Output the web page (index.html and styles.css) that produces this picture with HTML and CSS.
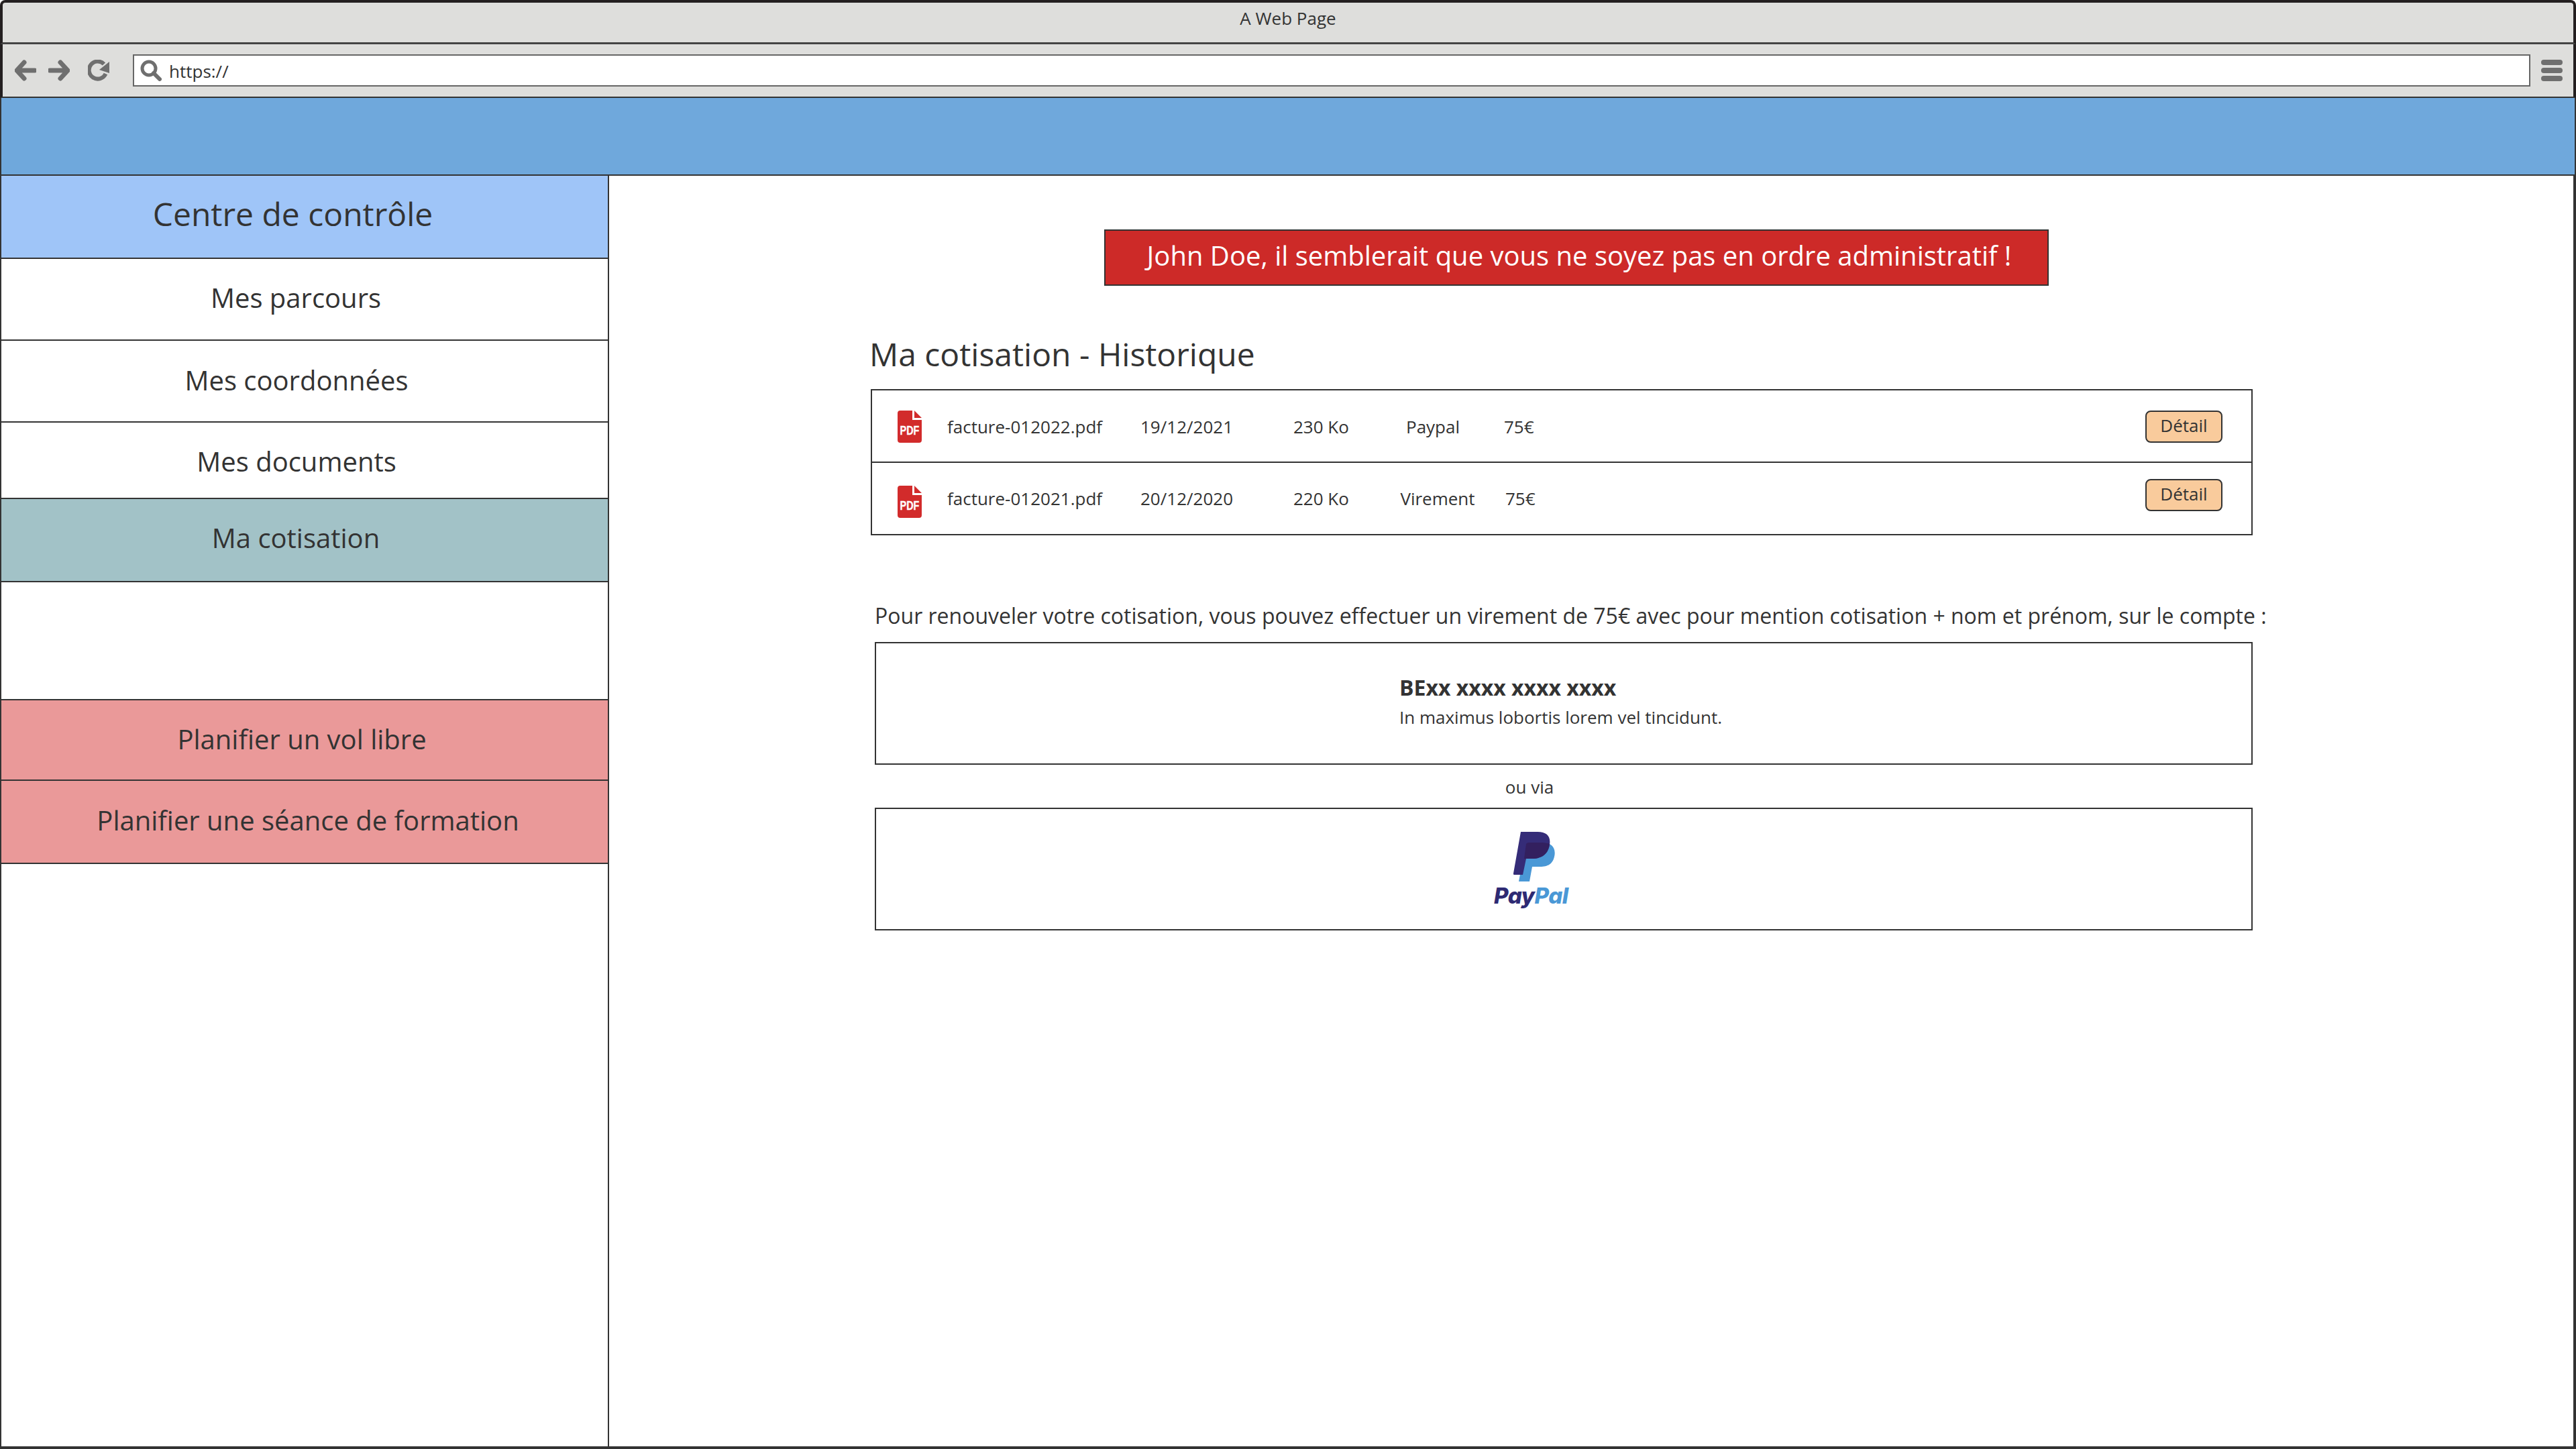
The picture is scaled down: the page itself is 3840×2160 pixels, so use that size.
FILE: index.html
```html
<!DOCTYPE html>
<html>
  <head>
    <link rel="stylesheet" href="styles.css">
  </head>

  <body>
    <div class="window">
      <div class="titlebar">A Web Page</div>
      <div class="toolbar">
        <svg class="tool-icon" viewBox="0 0 32 32"><path d="M14 4 3 16l11 12M4 16h26" fill="none" stroke="#6f6f6f" stroke-width="7" stroke-linecap="round" stroke-linejoin="round"/></svg>
        <svg class="tool-icon forward" viewBox="0 0 32 32"><path d="M18 4l11 12-11 12M28 16H2" fill="none" stroke="#6f6f6f" stroke-width="7" stroke-linecap="round" stroke-linejoin="round"/></svg>
        <svg class="tool-icon reload" viewBox="0 0 32 32"><path d="M26.500 21A13 13 0 1 1 24 6.500" fill="none" stroke="#6f6f6f" stroke-width="6"/><path d="M32 3V20L17 15Z" fill="#6f6f6f"/></svg>
        <div class="address">
          <svg class="search-icon" viewBox="0 0 32 32"><circle cx="13" cy="13" r="10" fill="none" stroke="#6f6f6f" stroke-width="5"/><path d="M20 20l9 9" stroke="#6f6f6f" stroke-width="6" stroke-linecap="round"/></svg>
          <span>https://</span>
        </div>
        <div class="menu-icon"><i></i><i></i><i></i></div>
      </div>
      <div class="top-band"></div>

      <div class="layout">
        <nav class="sidebar">
          <div class="side-item side-head">Centre de contrôle</div>
          <div class="side-item side-parcours">Mes parcours</div>
          <div class="side-item side-coord">Mes coordonnées</div>
          <div class="side-item side-docs">Mes documents</div>
          <div class="side-item side-active">Ma cotisation</div>
          <div class="side-gap"></div>
          <div class="side-item side-plan side-vol">Planifier un vol libre</div>
          <div class="side-item side-plan side-seance">Planifier une séance de formation</div>
        </nav>

        <main class="content">
          <div class="alert">John Doe, il semblerait que vous ne soyez pas en ordre administratif !</div>
          <h1 class="title">Ma cotisation - Historique</h1>

          <div class="history">
            <div class="row row-first">
              <svg class="pdf-icon" viewBox="0 0 36 48"><path d="M4 0H22V14H36V44a4 4 0 0 1-4 4H4a4 4 0 0 1-4-4V4a4 4 0 0 1 4-4ZM25 0 36 11H25Z" fill="#d22b2b"/><text transform="translate(18 36) scale(.9 1.2)" class="pdf-label">PDF</text></svg>
              <span class="cell cell-name">facture-012022.pdf</span>
              <span class="cell cell-date">19/12/2021</span>
              <span class="cell cell-size">230 Ko</span>
              <span class="cell cell-mode">Paypal</span>
              <span class="cell cell-price">75€</span>
              <button class="detail">Détail</button>
            </div>
            <div class="row row-second">
              <svg class="pdf-icon" viewBox="0 0 36 48"><path d="M4 0H22V14H36V44a4 4 0 0 1-4 4H4a4 4 0 0 1-4-4V4a4 4 0 0 1 4-4ZM25 0 36 11H25Z" fill="#d22b2b"/><text transform="translate(18 36) scale(.9 1.2)" class="pdf-label">PDF</text></svg>
              <span class="cell cell-name">facture-012021.pdf</span>
              <span class="cell cell-date">20/12/2020</span>
              <span class="cell cell-size">220 Ko</span>
              <span class="cell cell-mode mode-shift">Virement</span>
              <span class="cell cell-price price-shift">75€</span>
              <button class="detail">Détail</button>
            </div>
          </div>

          <p class="renew">Pour renouveler votre cotisation, vous pouvez effectuer un virement de 75€ avec pour mention cotisation + nom et prénom, sur le compte :</p>

          <div class="pay-box iban">
            <strong>BExx xxxx xxxx xxxx</strong>
            <span>In maximus lobortis lorem vel tincidunt.</span>
          </div>
          <div class="or">ou via</div>
          <div class="pay-box paypal">
            <svg class="pp-mark" viewBox="0 0 62 74">
              <path d="M19 16H43C57 16 64 24 61 37 58 50 49 52 38 52H28L24 74H8Z" fill="#4a98d6"/>
              <path d="M11 0H36C50 0 56 7 54 19 52 34 41 40 28 40H19L14 64H1C0 64 0 63 0 62Z" fill="#352c78"/>
              <path d="M19 18C20 17 21 16 23 16H43C47 16 51 17 54 18 52 34 41 40 28 40H16Z" fill="#33205f"/>
            </svg>
            <div class="pp-text"><span class="pp-pay">Pay</span><span class="pp-pal">Pal</span></div>
          </div>
        </main>
      </div>
    </div>
  </body>
</html>
```

FILE: styles.css
```css
* {
  box-sizing: border-box;
}

body {
  margin: 0;
  background-color: #fff;
  color: #333;
  font-family: "Open Sans", sans-serif;
}

.window {
  display: flex;
  flex-direction: column;
  width: 3840px;
  height: 2160px;
  border-bottom: 4px solid #333;
}

.titlebar {
  height: 66px;
  padding-bottom: 14px;
  display: flex;
  align-items: center;
  justify-content: center;
  background-color: #dededc;
  border: 4px solid #231f20;
  border-bottom: 3px solid #444;
  border-radius: 8px 8px 0 0;
  font-size: 26px;
}

.toolbar {
  height: 80px;
  display: flex;
  align-items: center;
  padding: 0 16px 0 18px;
  background-color: #dededc;
  border-left: 4px solid #231f20;
  border-right: 4px solid #231f20;
  border-bottom: 2px solid #333;
}

.tool-icon {
  width: 32px;
  height: 32px;
  flex-shrink: 0;
}

.forward {
  margin-left: 18px;
}

.reload {
  margin-left: 27px;
}

.address {
  flex: 1;
  height: 48px;
  margin: 0 16px 0 35px;
  display: flex;
  align-items: center;
  padding-left: 9px;
  background-color: #fff;
  border: 2px solid #666;
  font-size: 26px;
}

.address span {
  padding-top: 2px;
}

.search-icon {
  width: 32px;
  height: 32px;
  margin-right: 11px;
}

.menu-icon {
  width: 32px;
  display: flex;
  flex-direction: column;
  gap: 4px;
}

.menu-icon i {
  height: 8px;
  border-radius: 4px;
  background-color: #6f6f6f;
}

.top-band {
  height: 116px;
  background-color: #6fa8dc;
  border: 2px solid #333;
  border-top: none;
}

.layout {
  flex: 1;
  display: flex;
  border-left: 2px solid #333;
  border-right: 4px solid #333;
}

.sidebar {
  width: 906px;
  display: flex;
  flex-direction: column;
  border-right: 2px solid #333;
}

.side-item {
  display: flex;
  align-items: center;
  justify-content: center;
  border-bottom: 2px solid #333;
  font-size: 40px;
}

.side-head {
  height: 124px;
  padding: 0 35px 10px 0;
  background-color: #9fc5f8;
  font-size: 48px;
}

.side-parcours {
  height: 122px;
  padding: 0 26px 6px 0;
}

.side-coord {
  height: 122px;
  padding: 0 24px 4px 0;
}

.side-docs {
  height: 114px;
  padding: 2px 24px 0 0;
}

.side-active {
  height: 124px;
  padding: 0 26px 8px 0;
  background-color: #a2c2c7;
}

.side-gap {
  height: 176px;
  border-bottom: 2px solid #333;
}

.side-plan {
  background-color: #ea9999;
}

.side-vol {
  height: 120px;
  padding: 0 8px 4px 0;
}

.side-seance {
  height: 124px;
  padding: 0 0 6px 10px;
}

.content {
  flex: 1;
  padding: 80px 0 0 386px;
}

.alert {
  width: 1408px;
  height: 84px;
  margin-left: 352px;
  padding: 0 0 8px 8px;
  display: flex;
  align-items: center;
  justify-content: center;
  background-color: #cd2a28;
  border: 2px solid #333;
  color: #fff;
  font-size: 40px;
}

.title {
  margin: 69px 0 19px 2px;
  font-size: 48px;
  font-weight: 400;
  line-height: 66px;
}

.history {
  width: 2060px;
  height: 218px;
  margin-left: 4px;
  border: 2px solid #333;
  font-size: 26px;
}

.row {
  position: relative;
  display: flex;
  align-items: center;
}

.row-first {
  height: 108px;
  border-bottom: 2px solid #333;
}

.row-second {
  height: 106px;
}

.pdf-icon {
  position: absolute;
  left: 38px;
  width: 36px;
  height: 48px;
}

.row-first .pdf-icon {
  top: 30px;
}

.row-second .pdf-icon {
  top: 34px;
}

.pdf-label {
  fill: #fff;
  stroke: #fff;
  stroke-width: 0.3px;
  font-family: "Liberation Sans", sans-serif;
  font-size: 16px;
  font-weight: 700;
  text-anchor: middle;
}

.cell {
  position: absolute;
  top: 36px;
  white-space: nowrap;
}

.row-second .cell {
  top: 35px;
}

.cell-name {
  left: 112px;
}

.cell-date {
  left: 400px;
}

.cell-size {
  left: 628px;
}

.cell-mode {
  left: 766px;
  width: 140px;
  text-align: center;
}

.mode-shift {
  left: 773px;
}

.cell-price {
  left: 942px;
}

.price-shift {
  left: 944px;
}

.detail {
  position: absolute;
  left: 1898px;
  width: 115px;
  height: 48px;
  padding: 0 0 4px;
  background-color: #f9cb9c;
  border: 2px solid #333;
  border-radius: 8px;
  color: #333;
  font-family: inherit;
  font-size: 26px;
}

.row-first .detail {
  top: 30px;
}

.row-second .detail {
  top: 24px;
}

.renew {
  margin: 98px 0 0 10px;
  font-size: 32px;
  line-height: 44px;
  white-space: nowrap;
}

.pay-box {
  width: 2054px;
  height: 183px;
  margin-left: 10px;
  display: flex;
  flex-direction: column;
  align-items: center;
  border: 2px solid #333;
}

.iban {
  margin-top: 17px;
  padding: 44px 0 0;
  align-items: flex-start;
}

.iban strong,
.iban span {
  margin-left: 780px;
  white-space: nowrap;
}

.iban strong {
  font-size: 32px;
  font-weight: 700;
  line-height: 44px;
}

.iban span {
  padding-top: 4px;
  font-size: 26px;
  line-height: 36px;
}

.or {
  width: 2054px;
  height: 64px;
  padding: 2px 82px 0 0;
  display: flex;
  align-items: center;
  justify-content: center;
  font-size: 26px;
}

.paypal {
  padding: 34px 0 0 0;
  align-items: flex-start;
}

.pp-mark {
  width: 62px;
  height: 74px;
  margin-left: 950px;
}

.pp-text {
  margin: 2px 0 0 921px;
  font-family: "Inter", sans-serif;
  font-size: 33px;
  font-style: italic;
  font-weight: 800;
  line-height: 38px;
  letter-spacing: -0.5px;
}

.pp-pay {
  color: #2e2a73;
}

.pp-pal {
  color: #4a98d6;
}
```
